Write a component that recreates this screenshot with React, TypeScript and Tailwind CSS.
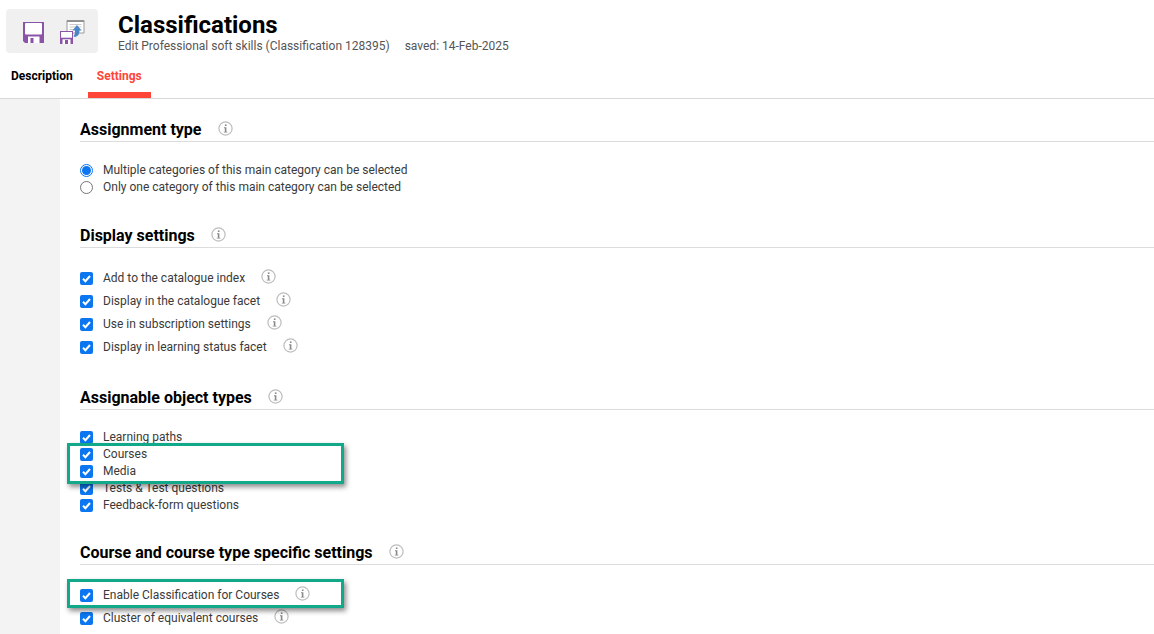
import React from 'react';

const InfoIcon = () => (
  <svg width="15" height="15" viewBox="0 0 15 15" className="shrink-0">
    <circle cx="7.5" cy="7.5" r="6.6" fill="#fff" stroke="#bdbdbd" strokeWidth="1.2" />
    <rect x="6.9" y="3.4" width="1.6" height="1.6" fill="#8a8a8a" />
    <path d="M6 6.3h2.4v4.4h1v.9H5.8v-.9h1V7.2H6z" fill="#8a8a8a" />
  </svg>
);

const Checkbox = () => (
  <span className="flex h-[13px] w-[13px] shrink-0 items-center justify-center rounded-[2px] bg-[#0b76f0]">
    <svg width="11" height="11" viewBox="0 0 11 11">
      <path d="M2 5.8l2.4 2.4L9 3" fill="none" stroke="#fff" strokeWidth="2" />
    </svg>
  </span>
);

const Radio = ({ checked }: { checked?: boolean }) => (
  <span
    className={
      checked
        ? 'flex h-[13px] w-[13px] shrink-0 items-center justify-center rounded-full border border-[#0b76f0] bg-white'
        : 'flex h-[13px] w-[13px] shrink-0 items-center justify-center rounded-full border border-[#767676] bg-white'
    }
  >
    {checked && <span className="h-[9px] w-[9px] rounded-full bg-[#0b76f0]" />}
  </span>
);

const SectionHeading = ({ title }: { title: string }) => (
  <div className="flex h-[27px] items-end gap-[16px] border-b border-[#dcdcdc] pb-[1px]">
    <h2 className="text-[16px] font-bold leading-[20px] text-black">{title}</h2>
    <span className="mb-[4px]">
      <InfoIcon />
    </span>
  </div>
);

const OptionRow = ({ label, info, height }: { label: string; info?: boolean; height: string }) => (
  <div className={`flex items-center ${height}`}>
    <Checkbox />
    <span className="mb-[2px] ml-[10px] text-[12px] text-[#3a3a3a]">{label}</span>
    {info && (
      <span className="ml-[16px] -mt-[4px]">
        <InfoIcon />
      </span>
    )}
  </div>
);

const App: React.FC = () => {
  return (
    <div className="relative h-[634px] w-[1154px] overflow-hidden bg-white font-['Roboto',sans-serif]">
      {/* Header */}
      <div className="h-[99px] border-b border-[#d8d8d8]">
        <div className="flex pl-[6px] pt-[9px]">
          <div className="flex h-[44px] w-[92px] items-center rounded-[4px] bg-[#f0f0f0] pl-[17px]">
            <svg width="21" height="22" viewBox="0 0 21 22" className="mt-[4px]">
              <path d="M0 0h21v21H2l-2-2z" fill="#8c54a8" />
              <rect x="2" y="1" width="17" height="11.500" rx="1" fill="#fff" />
              <rect x="5" y="14.500" width="11.500" height="6.500" fill="#fff" />
              <rect x="7.500" y="16" width="3" height="5" fill="#8c54a8" />
            </svg>
            <svg width="25" height="25" viewBox="0 0 25 25" className="ml-[16px] mt-[3px]">
              <path d="M7 0.500h17v12.500H7z" fill="#fff" stroke="#9a9a9a" />
              <path d="M7 0.500h17v1.500H7z" fill="#8f8f8f" />
              <path d="M9.500 4.500h12M9.500 7h12M9.500 9.500h12" stroke="#c9c9c9" />
              <path d="M17 5l4.500 5.500h-2c0 3.500-1.500 6-5 6.500l-1-1c1.500-1 1.500-3 1.500-5.500h-2.500z" fill="#4a86c5" />
              <path d="M0 11h13V24H0z" fill="#8c54a8" />
              <rect x="1" y="12" width="11" height="5.700" fill="#fff" />
              <rect x="2.500" y="19.300" width="8" height="4.700" fill="#fff" />
              <rect x="5" y="20" width="3" height="4" fill="#8c54a8" />
            </svg>
          </div>
          <div className="ml-[20px]">
            <h1 className="mt-[2px] text-[24px] font-bold leading-[28px] text-black">Classifications</h1>
            <p className="text-[12px] leading-[14px] text-[#555]">
              Edit Professional soft skills (Classification 128395)
              <span className="ml-[15px]">saved: 14-Feb-2025</span>
            </p>
          </div>
        </div>
        <div className="mt-[8px] flex text-[12px] font-bold">
          <div className="flex h-[37px] items-start pl-[11px] pt-[6px] text-black">Description</div>
          <div className="ml-[15px] flex h-[37px] w-[63px] justify-center border-b-[6px] border-[#ff4438] pt-[6px] text-[#ff4438]">
            Settings
          </div>
        </div>
      </div>

      {/* Body */}
      <div className="flex h-[535px]">
        <div className="w-[60px] shrink-0 bg-[#f3f3f3]" />
        <div className="flex-1 pl-[20px] pt-[16px]">
          <SectionHeading title="Assignment type" />
          <div className="mt-[20px]">
            <div className="flex h-[17px] items-center">
              <Radio checked />
              <span className="mb-[2px] ml-[10px] text-[12px] text-[#3a3a3a]">Multiple categories of this main category can be selected</span>
            </div>
            <div className="flex h-[17px] items-center">
              <Radio />
              <span className="mb-[2px] ml-[10px] text-[12px] text-[#3a3a3a]">Only one category of this main category can be selected</span>
            </div>
          </div>

          <div className="mt-[25px]">
            <SectionHeading title="Display settings" />
          </div>
          <div className="mt-[19px]">
            <OptionRow height="h-[23px]" label="Add to the catalogue index" info />
            <OptionRow height="h-[23px]" label="Display in the catalogue facet" info />
            <OptionRow height="h-[23px]" label="Use in subscription settings" info />
            <OptionRow height="h-[23px]" label="Display in learning status facet" info />
          </div>

          <div className="mt-[24px]">
            <SectionHeading title="Assignable object types" />
          </div>
          <div className="mt-[19px]">
            <OptionRow height="h-[17px]" label="Learning paths" />
            <OptionRow height="h-[17px]" label="Courses" />
            <OptionRow height="h-[17px]" label="Media" />
            <OptionRow height="h-[17px]" label="Tests & Test questions" />
            <OptionRow height="h-[17px]" label="Feedback-form questions" />
          </div>

          <div className="mt-[24px]">
            <SectionHeading title="Course and course type specific settings" />
          </div>
          <div className="mt-[19px]">
            <OptionRow height="h-[23px]" label="Enable Classification for Courses" info />
            <OptionRow height="h-[23px]" label="Cluster of equivalent courses" info />
          </div>
        </div>
      </div>

      {/* Highlight boxes drawn over the screenshot */}
      <div className="absolute left-[67px] top-[443px] h-[41px] w-[277px] border-[3px] border-[#12a88a] shadow-[2px_3px_5px_rgba(0,0,0,0.45)]" />
      <div className="absolute left-[67px] top-[579px] h-[29px] w-[277px] border-[3px] border-[#12a88a] shadow-[2px_3px_5px_rgba(0,0,0,0.45)]" />
    </div>
  );
};

export default App;
